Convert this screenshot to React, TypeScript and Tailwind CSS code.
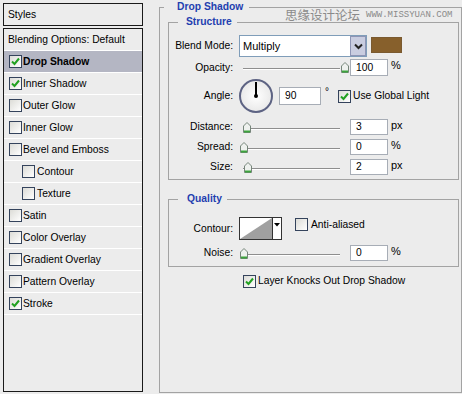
import React from "react";

const effects = [
  { name: "Drop Shadow", on: true, active: true },
  { name: "Inner Shadow", on: true },
  { name: "Outer Glow" },
  { name: "Inner Glow" },
  { name: "Bevel and Emboss" },
  { name: "Contour", sub: true },
  { name: "Texture", sub: true },
  { name: "Satin" },
  { name: "Color Overlay" },
  { name: "Gradient Overlay" },
  { name: "Pattern Overlay" },
  { name: "Stroke", on: true },
];

function Check({ on }: { on?: boolean }) {
  return (
    <span className="flex h-[13px] w-[13px] shrink-0 items-center justify-center border border-[#34435c] bg-linear-to-br from-[#dcdcd7] to-white">
      {on && (
        <svg width="9" height="9" viewBox="0 0 9 9">
          <path d="M1 4.5 L3.5 7 L8 1.5" stroke="#21a121" strokeWidth="2" fill="none" />
        </svg>
      )}
    </span>
  );
}

function Thumb() {
  return (
    <svg width="8" height="11" viewBox="0 0 8 11">
      <path d="M0.5 4 L4 0.5 L7.5 4 L7.5 10.5 L0.5 10.5 Z" fill="#eef1ee" stroke="#76857a" />
      <rect x="1" y="8.5" width="6" height="2" fill="#3da33d" />
    </svg>
  );
}

function Slider({ at }: { at: number }) {
  return (
    <div className="relative h-full w-[108px]">
      <div className="absolute left-[4px] top-[9px] h-px w-[97px] bg-[#8e8e8e]" />
      <div className="absolute left-[4px] top-[10px] h-px w-[97px] bg-white" />
      <div className="absolute top-[3px]" style={{ left: at }}>
        <Thumb />
      </div>
    </div>
  );
}

function Field({ value, w = "w-[38px]" }: { value: string; w?: string }) {
  return (
    <div className={`flex h-full items-center border border-[#a7adb6] bg-white pl-[5px] ${w}`}>
      {value}
    </div>
  );
}

function Label({ children }: { children: React.ReactNode }) {
  return <span className="w-[64px] shrink-0 text-right">{children}</span>;
}

function SliderRow({ label, at, value, unit, mt }: { label: string; at: number; value: string; unit: string; mt: string }) {
  return (
    <div className={`flex h-[16px] items-center ${mt}`}>
      <Label>{label}</Label>
      <div className="ml-[6px] h-full">
        <Slider at={at} />
      </div>
      <div className="ml-[3px] h-full">
        <Field value={value} />
      </div>
      <span className="ml-[3px] self-start text-[11px] leading-[12px]">{unit}</span>
    </div>
  );
}

export default function App() {
  return (
    <div className="relative flex h-[394px] w-[462px] overflow-hidden bg-[#ececec] font-['Liberation_Sans',Arial,sans-serif] text-[10.3px] leading-[12px] text-black">
      {/* styles list */}
      <aside className="ml-[3px] mt-[3px] flex w-[140px] flex-col">
        <div className="flex h-[23px] items-center border border-[#1a1a1a] pl-[4px]">Styles</div>
        <div className="mt-[2px] h-[364px] border border-[#1a1a1a]">
          <div className="flex h-[22px] items-center border-b border-white pl-[4px]">Blending Options: Default</div>
          {effects.map((e) => (
            <div
              key={e.name}
              className={`flex h-[22px] items-center gap-[1px] border-b border-white ${e.sub ? "pl-[18px]" : "pl-[5px]"} ${
                e.active ? "bg-[#b4b6c3] font-bold" : ""
              }`}
            >
              <Check on={e.on} />
              <span className={e.sub ? "ml-[1px]" : ""}>{e.name}</span>
            </div>
          ))}
        </div>
      </aside>

      {/* drop shadow panel */}
      <fieldset className="ml-[16px] mt-[1px] flex h-[392px] w-[303px] flex-col border border-[#a3a3a3]">
        <legend className="ml-[4px] h-[12px] pl-[13px] pr-[6px] font-bold text-[#1f3fb0]">Drop Shadow</legend>

        <fieldset className="ml-[8px] mt-[3px] flex w-[291px] flex-col border border-[#a3a3a3] pb-[4px]">
          <legend className="ml-[9px] h-[12px] pl-[8px] pr-[5px] font-bold text-[#1f3fb0]">Structure</legend>

          <div className="mt-[7px] flex h-[22px] items-center">
            <Label>Blend Mode:</Label>
            <div className="ml-[6px] flex h-full w-[128px] border border-[#7f9db9] bg-white">
              <span className="flex flex-1 items-center pl-[3px] text-[11px]">Multiply</span>
              <span className="flex w-[16px] items-center justify-center border border-[#8e95b5] bg-[#c9cde0]">
                <svg width="9" height="7" viewBox="0 0 9 7">
                  <path d="M1 1.5 L4.5 5 L8 1.5" stroke="#222" strokeWidth="2" fill="none" />
                </svg>
              </span>
            </div>
            <div className="ml-[4px] h-[16px] w-[31px] self-start mt-[2px] border border-[#7a5a30] bg-[#87602c]" />
          </div>

          <div className="mt-[2px] flex h-[17px] items-center">
            <Label>Opacity:</Label>
            <div className="ml-[6px] h-full">
              <Slider at={102} />
            </div>
            <div className="ml-[3px] h-full">
              <Field value="100" />
            </div>
            <span className="ml-[3px] self-start text-[11px] leading-[12px]">%</span>
          </div>

          <div className="mt-[3px] flex h-[34px] items-center">
            <Label>Angle:</Label>
            <div className="relative ml-[6px] h-[34px] w-[34px] rounded-full border-2 border-[#5d6383] bg-radial from-white to-[#e2e2e2]">
              <div className="absolute left-[14px] top-[1px] h-[15px] w-[2px] bg-black" />
              <div className="absolute left-[13px] top-[13px] h-[4px] w-[4px] rounded-full bg-black" />
            </div>
            <div className="ml-[6px] h-[18px]">
              <Field value="90" w="w-[42px]" />
            </div>
            <span className="ml-[4px] w-[8px] self-start mt-[7px] text-[10px]">°</span>
            <span className="ml-[5px]">
              <Check on />
            </span>
            <span className="ml-[2px]">Use Global Light</span>
          </div>

          <SliderRow label="Distance:" at={4} value="3" unit="px" mt="mt-[6px]" />
          <SliderRow label="Spread:" at={1} value="0" unit="%" mt="mt-[4px]" />
          <SliderRow label="Size:" at={5} value="2" unit="px" mt="mt-[4px]" />
        </fieldset>

        <fieldset className="ml-[8px] mt-[13px] flex w-[291px] flex-col border border-[#a3a3a3] pb-[5px]">
          <legend className="ml-[9px] h-[12px] pl-[9px] pr-[5px] font-bold text-[#1f3fb0]">Quality</legend>

          <div className="mt-[12px] flex h-[23px] items-center">
            <Label>Contour:</Label>
            <div className="ml-[6px] flex h-full w-[43px] border border-[#333]">
              <svg width="32" height="21" viewBox="0 0 32 21" className="block">
                <rect width="32" height="21" fill="#fff" />
                <path d="M0 21 L32 0 L32 21 Z" fill="#a0a0a0" />
              </svg>
              <span className="flex flex-1 justify-center border-l border-[#333] bg-white pt-[5px]">
                <svg width="6" height="4" viewBox="0 0 6 4">
                  <path d="M0 0 L6 0 L3 3.5 Z" fill="#000" />
                </svg>
              </span>
            </div>
            <span className="ml-[13px] mt-[1px] self-start">
              <Check />
            </span>
            <span className="ml-[3px] self-start mt-[2px]">Anti-aliased</span>
          </div>

          <SliderRow label="Noise:" at={1} value="0" unit="%" mt="mt-[5px]" />
        </fieldset>

        <div className="ml-[83px] mt-[7px] flex h-[14px] items-center">
          <Check on />
          <span className="ml-[2px]">Layer Knocks Out Drop Shadow</span>
        </div>
      </fieldset>

      {/* watermark */}
      <div className="absolute left-[285px] top-[7px] flex items-center text-[#8a8a8a]">
        <span className="font-['Noto_Sans_CJK_SC',sans-serif] text-[12.5px] leading-[16px]">思缘设计论坛</span>
        <span className="ml-[6px] font-['Liberation_Mono',monospace] text-[9px] leading-[16px]">WWW.MISSYUAN.COM</span>
      </div>
    </div>
  );
}
